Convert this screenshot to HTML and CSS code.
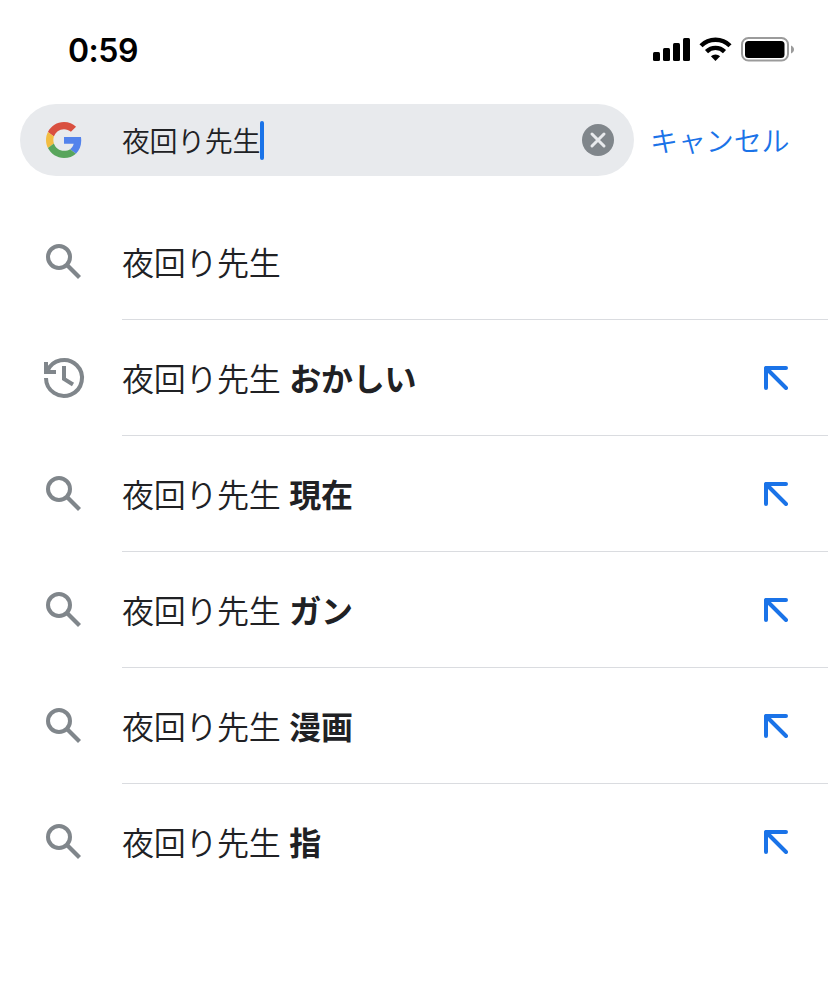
FILE: index.html
```
<!DOCTYPE html>
<html lang="ja">
    <head>
        <meta charset="utf-8">
        <title>夜回り先生</title>
        <link rel="stylesheet" href="styles.css">
    </head>
    <body>
        <svg width="0" height="0" class="sprites">
            <symbol id="search" viewBox="0 0 48 48">
                <g fill="none" stroke="#80868b" stroke-width="4">
                    <circle cx="19" cy="19" r="11"/>
                    <path d="M26.500 26.500L39.500 39.500" stroke-width="4.200"/>
                </g>
            </symbol>
            <symbol id="fill" viewBox="0 0 24 24">
                <path d="M2 22V2h20M2 2l20 20" fill="none" stroke="#1a73e8" stroke-width="4" stroke-linecap="round" stroke-linejoin="round"/>
            </symbol>
        </svg>

        <div class="status">
            <div class="time">0:59</div>
            <svg class="status-icons" width="142" height="26" viewBox="0 0 142 26">
                <rect x="0" y="16" width="7" height="9" rx="1.5"/>
                <rect x="10" y="12" width="7" height="13" rx="1.5"/>
                <rect x="20" y="7" width="7" height="18" rx="1.5"/>
                <rect x="30" y="2" width="7" height="23" rx="1.5"/>
                <g fill="none" stroke="#000" stroke-width="4.4">
                    <path d="M48 9.8a20.5 20.5 0 0 1 29 0"/>
                    <path d="M53.5 15.6a12.8 12.8 0 0 1 18 0"/>
                </g>
                <path d="M62.5 25l-4.6-4.7a6.8 6.8 0 0 1 9.2 0z"/>
                <rect x="89" y="2" width="46" height="22.5" rx="6.5" fill="none" stroke="#9b9b9b" stroke-width="2"/>
                <rect x="92" y="5" width="39.5" height="17" rx="3.5"/>
                <path d="M138 9.5c4 1.6 4 6.4 0 8z" fill="#9b9b9b"/>
            </svg>
        </div>

        <div class="topbar">
            <div class="searchbox">
                <svg class="google" width="36" height="36" viewBox="0 0 48 48">
                    <path fill="#d95040" d="M24 9.5c3.54 0 6.71 1.22 9.21 3.6l6.85-6.85C35.9 2.38 30.47 0 24 0 14.62 0 6.51 5.38 2.56 13.22l7.98 6.19C12.43 13.72 17.74 9.5 24 9.5z"/>
                    <path fill="#5383ec" d="M46.98 24.55c0-1.57-.15-3.09-.38-4.55H24v9.02h12.94c-.58 2.96-2.26 5.48-4.78 7.18l7.73 6c4.51-4.18 7.09-10.36 7.09-17.65z"/>
                    <path fill="#f2bd42" d="M10.53 28.59c-.48-1.45-.76-2.99-.76-4.59s.27-3.14.76-4.59l-7.98-6.19C.92 16.46 0 20.12 0 24s.92 7.54 2.56 10.78z"/>
                    <path fill="#58a55c" d="M24 48c6.48 0 11.93-2.13 15.89-5.81l-7.73-6c-2.15 1.45-4.92 2.3-8.16 2.3-6.26 0-11.57-4.22-13.47-9.91l-7.98 6.19C6.51 42.62 14.62 48 24 48z"/>
                </svg>
                <div class="query">夜回り先生</div>
                <div class="cursor"></div>
                <svg class="clear" width="32" height="32" viewBox="0 0 32 32">
                    <circle cx="16" cy="16" r="16" fill="#80868b"/>
                    <path d="M10 10l12 12M22 10L10 22" stroke="#e8eaed" stroke-width="3" stroke-linecap="round"/>
                </svg>
            </div>
            <div class="cancel">キャンセル</div>
        </div>

        <div class="list">
            <div class="row">
                <svg class="icon"><use href="#search"/></svg>
                <div class="item"><div class="text">夜回り先生</div></div>
            </div>
            <div class="row">
                <svg class="icon" viewBox="0 0 48 48">
                    <path d="M6 24A18 18 0 1 0 7.4 17" fill="none" stroke="#80868b" stroke-width="4"/>
                    <path d="M4 8h4v5l2-1 1 2-2 2h7v4H4z"/>
                    <path d="M24 12v13l9 5.5" fill="none" stroke="#80868b" stroke-width="4"/>
                </svg>
                <div class="item"><div class="text">夜回り先生 <b>おかしい</b></div><svg class="arrow"><use href="#fill"/></svg></div>
            </div>
            <div class="row">
                <svg class="icon"><use href="#search"/></svg>
                <div class="item"><div class="text">夜回り先生 <b>現在</b></div><svg class="arrow"><use href="#fill"/></svg></div>
            </div>
            <div class="row">
                <svg class="icon"><use href="#search"/></svg>
                <div class="item"><div class="text">夜回り先生 <b>ガン</b></div><svg class="arrow"><use href="#fill"/></svg></div>
            </div>
            <div class="row">
                <svg class="icon"><use href="#search"/></svg>
                <div class="item"><div class="text">夜回り先生 <b>漫画</b></div><svg class="arrow"><use href="#fill"/></svg></div>
            </div>
            <div class="row">
                <svg class="icon"><use href="#search"/></svg>
                <div class="item"><div class="text">夜回り先生 <b>指</b></div><svg class="arrow"><use href="#fill"/></svg></div>
            </div>
        </div>
    </body>
</html>
```
FILE: styles.css
```
*{
    box-sizing: border-box;
}
body{
    margin: 0;
    background-color: #fff;
    color: #202124;
    font-family: "Noto Sans CJK JP", sans-serif;
    font-weight: 350;
    overflow: hidden;
}
svg{
    display: block;
    flex-shrink: 0;
}
.sprites{
    display: none;
}
.status{
    display: flex;
    justify-content: space-between;
    align-items: flex-start;
    height: 104px;
    padding: 36px 33px 0 68px;
}
.time{
    font-family: Inter, sans-serif;
    font-weight: 600;
    font-size: 32px;
    line-height: 29px;
    letter-spacing: -0.5px;
    color: #000;
}
.topbar{
    display: flex;
    align-items: center;
    height: 72px;
    padding-left: 20px;
}
.searchbox{
    display: flex;
    align-items: center;
    width: 614px;
    height: 72px;
    padding: 0 20px 0 26px;
    border-radius: 36px;
    background-color: #e8eaed;
}
.query{
    margin-left: 40px;
    font-size: 28px;
    line-height: 40px;
    letter-spacing: -0.4px;
}
.cursor{
    width: 4px;
    height: 39px;
    border-radius: 2px;
    background-color: #1a73e8;
}
.clear{
    margin-left: auto;
}
.cancel{
    margin-left: 16px;
    font-size: 28px;
    line-height: 40px;
    letter-spacing: -0.1px;
    color: #1a73e8;
}
.list{
    padding-top: 28px;
}
.row{
    display: flex;
    height: 116px;
    padding-left: 40px;
}
.icon{
    width: 48px;
    height: 48px;
    margin: 34px 34px 0 0;
    fill: #80868b;
}
.item{
    flex: 1;
    display: flex;
    justify-content: space-between;
    align-items: center;
    padding-right: 40px;
    border-bottom: 1px solid #dadce0;
}
.row:last-child .item{
    border-bottom: 1px solid transparent;
}
.text{
    padding-bottom: 2px;
    font-size: 32px;
    line-height: 48px;
    letter-spacing: -0.3px;
}
.text b{
    margin-left: 2px;
    font-weight: 700;
}
.arrow{
    width: 24px;
    height: 24px;
}
```
